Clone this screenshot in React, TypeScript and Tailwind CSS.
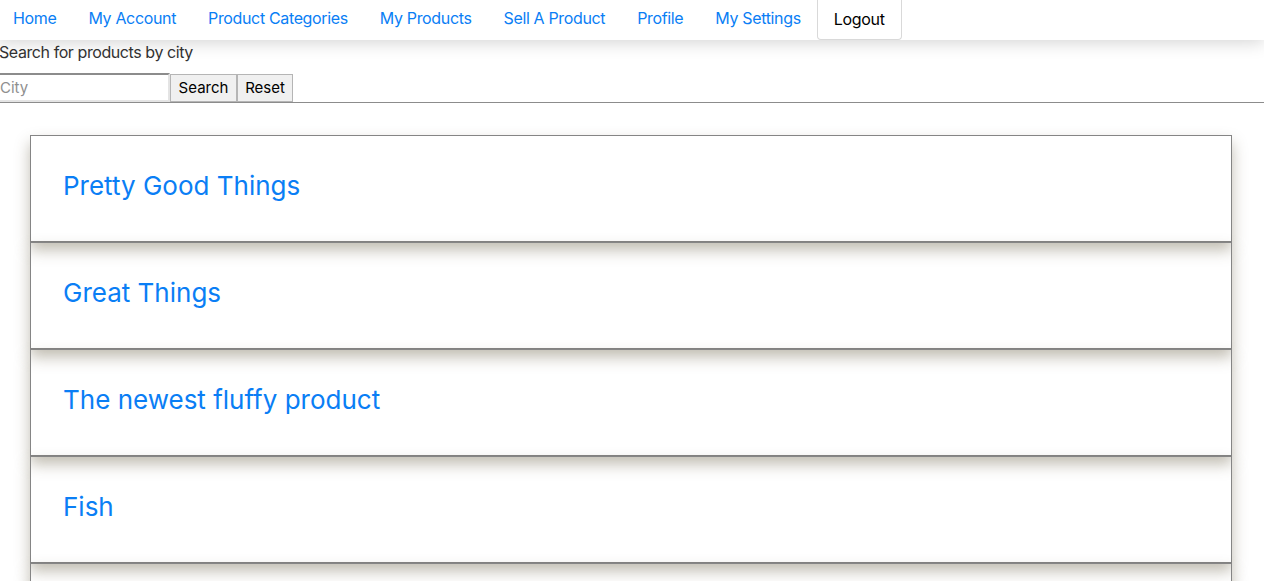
const links = ["Home", "My Account", "Product Categories", "My Products", "Sell A Product", "Profile", "My Settings"];

const products = ["Pretty Good Things", "Great Things", "The newest fluffy product", "Fish", "Hats"];

const font = "font-['Inter','Liberation_Sans',sans-serif]";

export default function App() {
  return (
    <div className={`${font} bg-white min-h-[581px] h-[581px] overflow-hidden text-[16px]`}>
      {/* Nav */}
      <nav className="relative z-10 flex h-10 items-stretch bg-white pl-0 shadow-[0_2px_18px_rgba(0,0,0,0.18)] -ml-[3px]">
        {links.map((l) => (
          <a key={l} className="flex items-center px-4 pb-[4px] text-[#0a7ef5] tracking-[-0.35px]">
            {l}
          </a>
        ))}
        <button className="flex items-center px-4 pb-[2px] border border-t-0 border-[#d9d9d9] rounded-b-[4px] bg-white text-black tracking-[-0.3px]">
          Logout
        </button>
      </nav>

      {/* Search */}
      <div className="border-b border-[#8c8c8c]">
        <div className="ml-[-1px] pt-0 h-[33px] text-[16px] text-[#333] tracking-[-0.42px]">Search for products by city</div>
        <form className="flex h-[29px]">
          <input
            placeholder="City"
            className="w-[170px] h-[29px] border-2 border-l-0 border-t-[#8c8c8c] border-r-[#e4e4e4] border-b-[#e4e4e4] px-0 text-[15px] placeholder:text-[#8f8f8f] outline-none"
          />
          <button type="button" className="h-[28px] mt-[1px] w-[67px] border border-[#b5b5b5] bg-[#f0f0f0] text-[15px] text-black">
            Search
          </button>
          <button type="button" className="h-[28px] mt-[1px] w-[56px] border border-[#b5b5b5] bg-[#f0f0f0] text-[15px] text-black">
            Reset
          </button>
        </form>
      </div>

      {/* Product list */}
      <div className="ml-[30px] mr-[32px] mt-[32px] flex flex-col">
        {products.map((p) => (
          <div
            key={p}
            className="h-[107px] border border-[#858585] flex items-center pl-[32px] pb-[7px] shadow-[0_8px_14px_rgba(90,80,50,0.38)]"
          >
            <h2 className="text-[26px] text-[#0a7ef5] tracking-[0px]">{p}</h2>
          </div>
        ))}
      </div>
    </div>
  );
}
